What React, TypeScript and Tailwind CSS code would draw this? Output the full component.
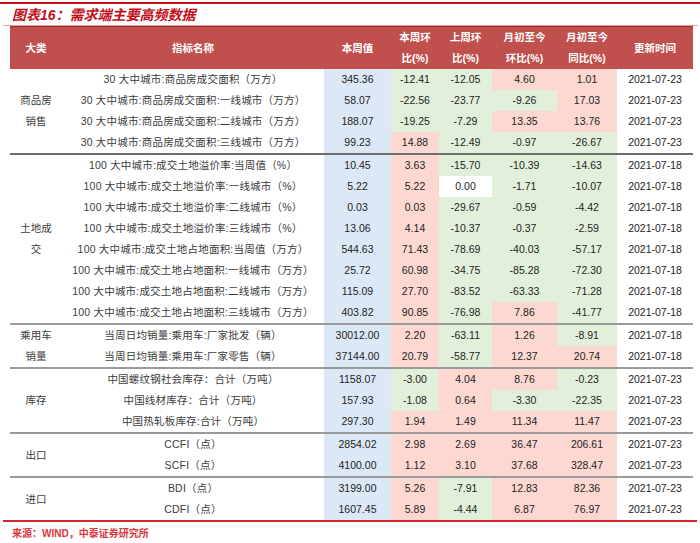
import React from "react";

type Tone = "g" | "p" | "w";
type Row = {
  name: React.ReactNode;
  value: string;
  cells: [string, Tone][];
  date: string;
};
type Section = { label: string[]; rows: Row[] };

const num = "font-['Liberation_Sans','Noto_Sans_CJK_SC',sans-serif]";

const toneBg: Record<Tone, string> = {
  g: "bg-[#e2efda]",
  p: "bg-[#fcd8d1]",
  w: "bg-white",
};

// column widths: name 262, value 67, then 48 / 53 / 65 / 60, date 76
const colW = ["w-[48px]", "w-[53px]", "w-[65px]", "w-[60px]"];

function r(
  name: React.ReactNode,
  value: string,
  cells: [string, Tone][],
  date: string
): Row {
  return { name, value, cells, date };
}

const sections: Section[] = [
  {
    label: ["商品房", "销售"],
    rows: [
      r("30 大中城市:商品房成交面积（万方）", "345.36", [["-12.41", "g"], ["-12.05", "g"], ["4.60", "p"], ["1.01", "p"]], "2021-07-23"),
      r("30 大中城市:商品房成交面积:一线城市（万方）", "58.07", [["-22.56", "g"], ["-23.77", "g"], ["-9.26", "g"], ["17.03", "p"]], "2021-07-23"),
      r("30 大中城市:商品房成交面积:二线城市（万方）", "188.07", [["-19.25", "g"], ["-7.29", "g"], ["13.35", "p"], ["13.76", "p"]], "2021-07-23"),
      r("30 大中城市:商品房成交面积:三线城市（万方）", "99.23", [["14.88", "p"], ["-12.49", "g"], ["-0.97", "g"], ["-26.67", "g"]], "2021-07-23"),
    ],
  },
  {
    label: ["土地成", "交"],
    rows: [
      r("100 大中城市:成交土地溢价率:当周值（%）", "10.45", [["3.63", "p"], ["-15.70", "g"], ["-10.39", "g"], ["-14.63", "g"]], "2021-07-18"),
      r("100 大中城市:成交土地溢价率:一线城市（%）", "5.22", [["5.22", "p"], ["0.00", "w"], ["-1.71", "g"], ["-10.07", "g"]], "2021-07-18"),
      r("100 大中城市:成交土地溢价率:二线城市（%）", "0.03", [["0.03", "p"], ["-29.67", "g"], ["-0.59", "g"], ["-4.42", "g"]], "2021-07-18"),
      r("100 大中城市:成交土地溢价率:三线城市（%）", "13.06", [["4.14", "p"], ["-10.37", "g"], ["-0.37", "g"], ["-2.59", "g"]], "2021-07-18"),
      r("100 大中城市:成交土地占地面积:当周值（万方）", "544.63", [["71.43", "p"], ["-78.69", "g"], ["-40.03", "g"], ["-57.17", "g"]], "2021-07-18"),
      r("100 大中城市:成交土地占地面积:一线城市（万方）", "25.72", [["60.98", "p"], ["-34.75", "g"], ["-85.28", "g"], ["-72.30", "g"]], "2021-07-18"),
      r("100 大中城市:成交土地占地面积:二线城市（万方）", "115.09", [["27.70", "p"], ["-83.52", "g"], ["-63.33", "g"], ["-71.28", "g"]], "2021-07-18"),
      r("100 大中城市:成交土地占地面积:三线城市（万方）", "403.82", [["90.85", "p"], ["-76.98", "g"], ["7.86", "p"], ["-41.77", "g"]], "2021-07-18"),
    ],
  },
  {
    label: ["乘用车", "销量"],
    rows: [
      r("当周日均销量:乘用车:厂家批发（辆）", "30012.00", [["2.20", "p"], ["-63.11", "g"], ["1.26", "p"], ["-8.91", "g"]], "2021-07-18"),
      r("当周日均销量:乘用车:厂家零售（辆）", "37144.00", [["20.79", "p"], ["-58.77", "g"], ["12.37", "p"], ["20.74", "p"]], "2021-07-18"),
    ],
  },
  {
    label: ["库存"],
    rows: [
      r("中国螺纹钢社会库存：合计（万吨）", "1158.07", [["-3.00", "g"], ["4.04", "p"], ["8.76", "p"], ["-0.23", "g"]], "2021-07-23"),
      r("中国线材库存：合计（万吨）", "157.93", [["-1.08", "g"], ["0.64", "p"], ["-3.30", "g"], ["-22.35", "g"]], "2021-07-23"),
      r("中国热轧板库存:合计（万吨）", "297.30", [["1.94", "p"], ["1.49", "p"], ["11.34", "p"], ["11.47", "p"]], "2021-07-23"),
    ],
  },
  {
    label: ["出口"],
    rows: [
      r("CCFI（点）", "2854.02", [["2.98", "p"], ["2.69", "p"], ["36.47", "p"], ["206.61", "p"]], "2021-07-23"),
      r("SCFI（点）", "4100.00", [["1.12", "p"], ["3.10", "p"], ["37.68", "p"], ["328.47", "p"]], "2021-07-23"),
    ],
  },
  {
    label: ["进口"],
    rows: [
      r("BDI（点）", "3199.00", [["5.26", "p"], ["-7.91", "g"], ["12.83", "p"], ["82.36", "p"]], "2021-07-23"),
      r("CDFI（点）", "1607.45", [["5.89", "p"], ["-4.44", "g"], ["6.87", "p"], ["76.97", "p"]], "2021-07-23"),
    ],
  },
];

const headers: { lines: string[]; w: string }[] = [
  { lines: ["本周值"], w: "w-[67px]" },
  { lines: ["本周环", "比(%)"], w: "w-[48px]" },
  { lines: ["上周环", "比(%)"], w: "w-[53px]" },
  { lines: ["月初至今", "环比(%)"], w: "w-[65px]" },
  { lines: ["月初至今", "同比(%)"], w: "w-[60px]" },
  { lines: ["更新时间"], w: "w-[76px]" },
];

export default function App() {
  return (
    <div className={`w-[700px] h-[543px] bg-white overflow-hidden ${num}`}>
      {/* title */}
      <div className="h-[2px] mt-[2px] bg-[#c8101e]" />
      <div className="h-[21px] flex items-center pl-[12px] text-[14px] font-bold italic text-[#c0101c] leading-none">
        图表16：需求端主要高频数据
      </div>
      <div className="h-px ml-[3px] mr-[2px] bg-[#eaa0a0]" />

      {/* table */}
      <div className="ml-[10px] w-[683px]">
        <div className="flex h-[43px] bg-[#c0504d] border-t border-[#a3221f] text-white font-bold text-[10.5px] leading-[21px]">
          <div className="w-[52px] flex items-center justify-center">大类</div>
          <div className="w-[262px] flex items-center justify-center">指标名称</div>
          {headers.map((h) => (
            <div key={h.lines.join()} className={`${h.w} flex flex-col items-center justify-center`}>
              {h.lines.map((l) => (
                <span key={l}>{l}</span>
              ))}
            </div>
          ))}
        </div>

        {sections.map((s, si) => (
          <div
            key={si}
            className={`flex ${si > 0 ? (si === 1 ? "border-t-2 border-[#6e6e6e]" : "border-t-2 border-[#9a9a9a]") : ""}`}
          >
            <div className="w-[52px] flex flex-col items-center justify-center text-[10.5px] leading-[21px] text-[#3c3c3c]">
              {s.label.map((l) => (
                <span key={l}>{l}</span>
              ))}
            </div>
            <div className="flex flex-col">
              {s.rows.map((row, ri) => (
                <div key={ri} className="flex h-[21px] items-stretch text-[10.5px] text-[#1e1e1e]">
                  <div className="w-[262px] flex items-center justify-center text-[#3c3c3c] tracking-[0.2px] whitespace-nowrap">
                    {row.name}
                  </div>
                  <div className="w-[67px] flex items-center justify-center bg-[#dce8f5]">{row.value}</div>
                  {row.cells.map(([v, t], ci) => (
                    <div key={ci} className={`${colW[ci]} flex items-center justify-center ${toneBg[t]}`}>
                      {v}
                    </div>
                  ))}
                  <div className="w-[76px] flex items-center justify-center">{row.date}</div>
                </div>
              ))}
            </div>
          </div>
        ))}
      </div>
      <div className="h-[2px] ml-[3px] mr-[3px] bg-[#d8262e]" />
      <div className="pl-[12px] pt-[7px] text-[10px] font-bold text-[#d9363e] leading-none">
        来源：WIND，中泰证券研究所
      </div>
    </div>
  );
}
